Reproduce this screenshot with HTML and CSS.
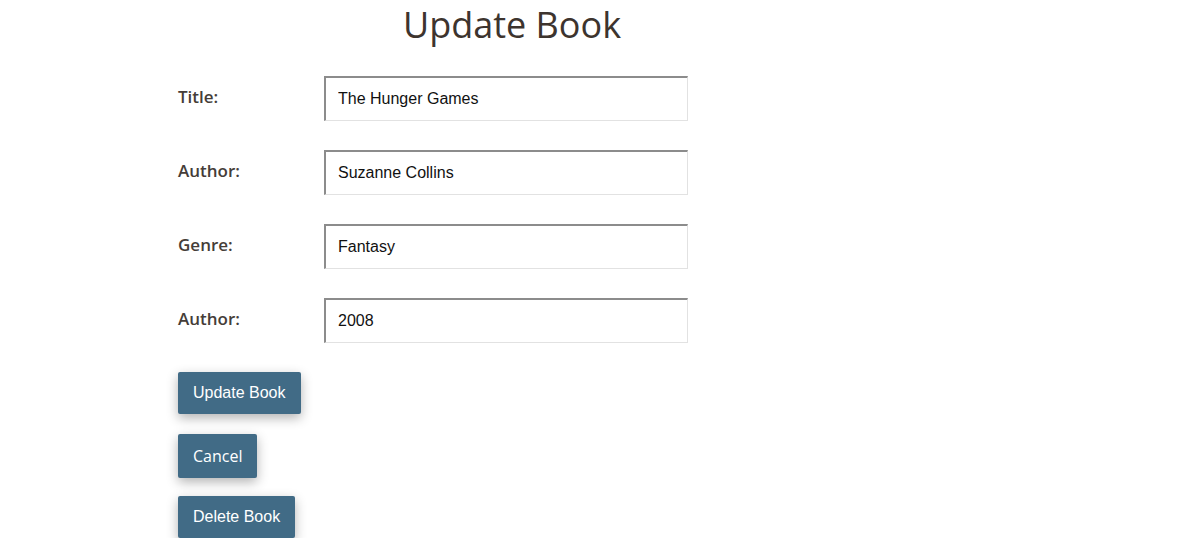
FILE: index.html
```html
<!DOCTYPE html>
<html>
<head>
<meta charset="utf-8">
<link rel="stylesheet" href="styles.css">
</head>
<body>
<div class="page">
  <h1 class="heading">Update Book</h1>
  <form class="form">
    <div class="row"><label class="label">Title:</label><input class="field" type="text" value="The Hunger Games"></div>
    <div class="row"><label class="label">Author:</label><input class="field" type="text" value="Suzanne Collins"></div>
    <div class="row"><label class="label">Genre:</label><input class="field" type="text" value="Fantasy"></div>
    <div class="row"><label class="label">Author:</label><input class="field" type="text" value="2008"></div>
    <div class="actions">
      <button class="btn" type="button">Update Book</button>
      <a class="btn btn-link">Cancel</a>
      <button class="btn btn-last" type="button">Delete Book</button>
    </div>
  </form>
</div>
</body>
</html>
```
FILE: styles.css
```css
* { box-sizing: border-box; }
body {
  margin: 0;
  background: #fff;
  font-family: "Open Sans", sans-serif;
  color: #3a322d;
}
.page {
  padding-left: 178px;
}
.heading {
  width: 668px;
  margin: 0;
  text-align: center;
  font-family: "Open Sans", sans-serif;
  font-weight: 400;
  font-size: 36px;
  line-height: 49px;
  color: #3d342e;
}
.form {
  display: flex;
  flex-direction: column;
  align-items: flex-start;
  margin-top: 27px;
}
.row {
  display: flex;
  align-items: center;
  margin-bottom: 29px;
}
.label {
  width: 146px;
  padding-bottom: 5px;
  font-size: 17px;
  font-weight: 600;
  color: #453d38;
}
.field {
  width: 364px;
  height: 45px;
  padding: 0 12px;
  font-family: "Liberation Sans", Arial, sans-serif;
  font-size: 16px;
  color: #111;
  background: #fff;
  border-style: solid;
  border-width: 2px 1px 1px 2px;
  border-color: #8c8c8c #e2e2e2 #e2e2e2 #8c8c8c;
  outline: none;
}
.actions {
  display: flex;
  flex-direction: column;
  align-items: flex-start;
  gap: 20px;
}
.btn {
  display: inline-block;
  padding: 12px 15px;
  font-family: "Liberation Sans", Arial, sans-serif;
  font-size: 16px;
  line-height: 18px;
  color: #fff;
  background: #416b86;
  border: none;
  border-radius: 2px;
  box-shadow: 0 4px 12px rgba(0, 0, 0, 0.3);
  cursor: pointer;
}
.btn-link {
  font-family: "Open Sans", sans-serif;
  line-height: 22px;
  padding: 11px 15px;
  text-decoration: none;
}
.btn-last {
  margin-top: -2px;
}
```
